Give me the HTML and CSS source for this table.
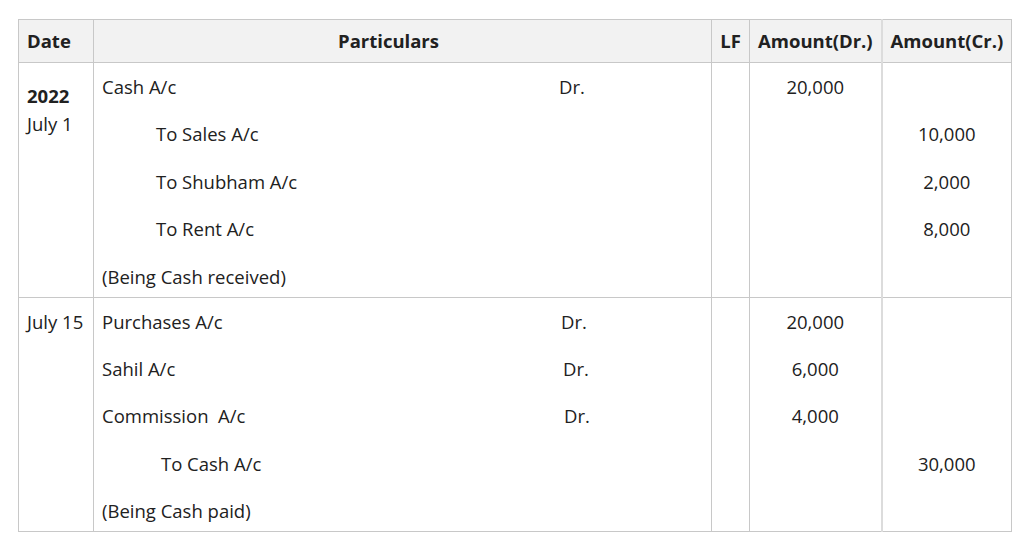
FILE: index.html
```html
<!DOCTYPE html>
<html>
<head>
<meta charset="utf-8">
<link rel="stylesheet" href="styles.css">
</head>
<body>
<table class="journal">
  <colgroup>
    <col class="w-date">
    <col class="w-part">
    <col class="w-lf">
    <col class="w-dr">
    <col class="w-cr">
  </colgroup>
  <thead>
    <tr>
      <th class="left">Date</th>
      <th class="h-part">Particulars</th>
      <th>LF</th>
      <th>Amount(Dr.)</th>
      <th class="c-cr">Amount(Cr.)</th>
    </tr>
  </thead>
  <tbody>
    <tr>
      <td class="c-date">
        <div class="date-first"><b>2022</b><br>July 1</div>
      </td>
      <td class="c-part">
        <div class="ln"><span class="nm">Cash A/c</span><span>Dr.</span></div>
        <div class="ln ind">To Sales A/c</div>
        <div class="ln ind">To Shubham A/c</div>
        <div class="ln ind">To Rent A/c</div>
        <div class="ln">(Being Cash received)</div>
      </td>
      <td class="c-lf"></td>
      <td class="c-dr">
        <div class="ln">20,000</div>
      </td>
      <td class="c-cr">
        <div class="ln">&nbsp;</div>
        <div class="ln">10,000</div>
        <div class="ln">2,000</div>
        <div class="ln">8,000</div>
      </td>
    </tr>
    <tr>
      <td class="c-date">
        <div class="ln">July 15</div>
      </td>
      <td class="c-part">
        <div class="ln"><span class="nm nm2">Purchases A/c</span><span>Dr.</span></div>
        <div class="ln"><span class="nm nm3">Sahil A/c</span><span>Dr.</span></div>
        <div class="ln"><span class="nm nm4">Commission&nbsp; A/c</span><span>Dr.</span></div>
        <div class="ln ind2">To Cash A/c</div>
        <div class="ln">(Being Cash paid)</div>
      </td>
      <td class="c-lf"></td>
      <td class="c-dr">
        <div class="ln">20,000</div>
        <div class="ln">6,000</div>
        <div class="ln">4,000</div>
      </td>
      <td class="c-cr">
        <div class="ln">&nbsp;</div>
        <div class="ln">&nbsp;</div>
        <div class="ln">&nbsp;</div>
        <div class="ln">30,000</div>
      </td>
    </tr>
  </tbody>
</table>
</body>
</html>
```

FILE: styles.css
```css
html, body {
  margin: 0;
  padding: 0;
  background: #ffffff;
}
body {
  padding: 19px 13px 0 18px;
  font-family: "Open Sans", "Noto Sans", sans-serif;
  font-size: 18.5px;
  color: #212121;
}
.journal {
  border-collapse: collapse;
  width: 993px;
  table-layout: fixed;
}
.w-date { width: 75px; }
.w-part { width: 618px; }
.w-lf { width: 38px; }
.w-dr { width: 132px; }
.w-cr { width: 130px; }
.journal th,
.journal td {
  border: 1px solid #c8c8c8;
  vertical-align: top;
  padding: 0 8px;
  line-height: 24px;
}
.journal th {
  background: #f2f2f2;
  font-weight: 700;
  height: 42px;
  padding-top: 9px;
  padding-bottom: 9px;
  vertical-align: middle;
  text-align: center;
  box-sizing: border-box;
}
.journal th.left { text-align: left; }
.journal th.h-part { padding-right: 36px; }
.journal th.c-cr,
.journal td.c-cr { border-left: 2px solid #dcdcdc; }
.journal td {
  padding-top: 12px;
  padding-bottom: 8px;
}
.journal td.c-dr,
.journal td.c-cr { text-align: center; }
.ln { line-height: 24px; white-space: nowrap; }
.ln + .ln { margin-top: 23.4px; }
.nm { display: inline-block; width: 457px; }
.nm2 { width: 459px; }
.nm3 { width: 461px; }
.nm4 { width: 462px; }
.ind { padding-left: 54px; }
.ind2 { padding-left: 59px; }
.journal td .date-first {
  margin-top: 7px;
  line-height: 28px;
}
```
